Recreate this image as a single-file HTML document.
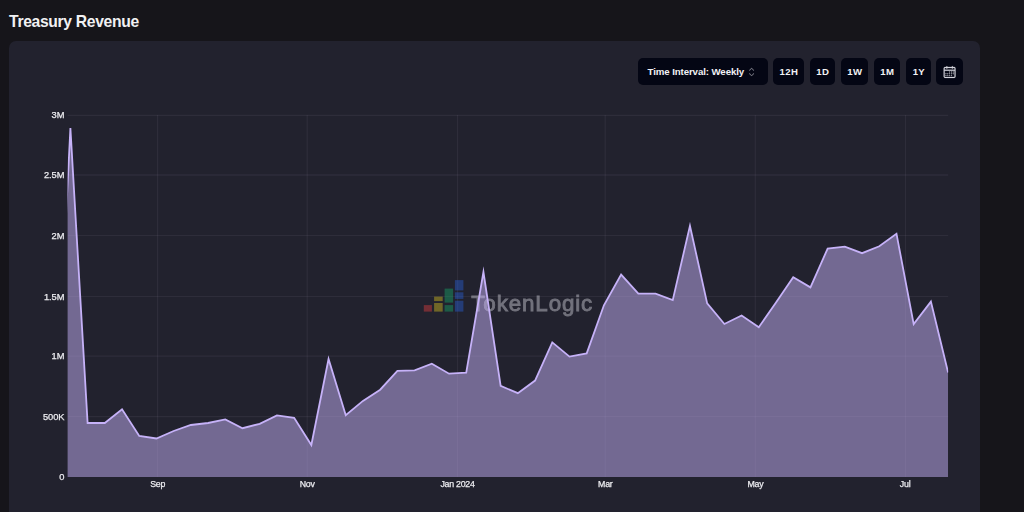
<!DOCTYPE html>
<html><head><meta charset="utf-8"><title>Treasury Revenue</title>
<style>
html,body{margin:0;padding:0;}
body{width:1024px;height:512px;overflow:hidden;background:#16151a;font-family:"Liberation Sans",sans-serif;position:relative;color:#fff;}
.title{position:absolute;left:9px;top:12px;font-size:15.7px;font-weight:bold;line-height:20px;color:#f1f1f3;white-space:nowrap;letter-spacing:-0.33px;}
.card{position:absolute;left:9px;top:41px;width:971px;height:500px;background:#22222e;border-radius:7px;}
.btn{position:absolute;top:58px;height:27px;background:#040614;border-radius:5px;color:#f2f2f5;font-size:9.6px;font-weight:bold;line-height:28px;letter-spacing:0.4px;text-indent:0.8px;text-align:center;white-space:nowrap;}
.sel{left:637.5px;width:130px;text-align:left;font-size:9.7px;letter-spacing:-0.1px;}
.sel span{position:absolute;left:10px;top:0;text-indent:0;}
svg.main{position:absolute;left:0;top:0;will-change:transform;}
.tick{fill:#ececf0;stroke:#ececf0;stroke-width:0.25px;font-family:"Liberation Sans",sans-serif;}
</style></head><body>
<div class="title">Treasury Revenue</div>
<div class="card"></div>
<div class="btn sel"><span>Time Interval: Weekly</span></div>
<div class="btn" style="left:773px;width:31px">12H</div>
<div class="btn" style="left:810px;width:25px">1D</div>
<div class="btn" style="left:841px;width:27px">1W</div>
<div class="btn" style="left:874px;width:26px">1M</div>
<div class="btn" style="left:906px;width:25px">1Y</div>
<div class="btn" style="left:936px;width:27px"></div>
<svg class="main" width="1024" height="512" viewBox="0 0 1024 512">
<defs><clipPath id="plot"><rect x="67.6" y="100" width="880.6" height="377.1"/></clipPath></defs>
<!-- grid -->
<g stroke="rgb(235,225,255)" stroke-opacity="0.057">
<line x1="67.6" x2="948.2" y1="115.35" y2="115.35" stroke-width="1.3"/>
<line x1="67.6" x2="948.2" y1="175.0" y2="175.0" stroke-width="1.5"/>
<line x1="67.6" x2="948.2" y1="235.5" y2="235.5" stroke-width="1.15"/>
<line x1="67.6" x2="948.2" y1="296.5" y2="296.5" stroke-width="1.15"/>
<line x1="67.6" x2="948.2" y1="356.2" y2="356.2" stroke-width="1.3"/>
<line x1="67.6" x2="948.2" y1="416.55" y2="416.55" stroke-width="1.15"/>
<line y1="115" y2="477.1" x1="157.6" x2="157.6" stroke-width="1.2"/>
<line y1="115" y2="477.1" x1="307.2" x2="307.2" stroke-width="1.2"/>
<line y1="115" y2="477.1" x1="457.55" x2="457.55" stroke-width="1.2"/>
<line y1="115" y2="477.1" x1="605.2" x2="605.2" stroke-width="1.2"/>
<line y1="115" y2="477.1" x1="755.3" x2="755.3" stroke-width="1.2"/>
<line y1="115" y2="477.1" x1="905.5" x2="905.5" stroke-width="1.2"/>
</g>
<!-- watermark -->
<g opacity="0.43">
<rect x="423.8" y="305.1" width="8.1" height="6.5" fill="#e04040"/>
<rect x="434.1" y="296.6" width="8.6" height="4.5" fill="#d8c020"/>
<rect x="434.1" y="303" width="8.6" height="8.6" fill="#d8c020"/>
<rect x="444.6" y="288.6" width="8.5" height="14" fill="#18a868"/>
<rect x="444.6" y="305.1" width="8.5" height="6.5" fill="#18a868"/>
<rect x="454.9" y="280.1" width="8.5" height="10.3" fill="#2860d8"/>
<rect x="454.9" y="292.3" width="8.5" height="6.6" fill="#2860d8"/>
<rect x="454.9" y="300.75" width="8.5" height="10.85" fill="#2860d8"/>
<text x="471.3" y="311.2" font-family="Liberation Sans, sans-serif" font-size="22.4" fill="#dcdce4" stroke="#dcdce4" stroke-width="0.85" letter-spacing="0.86">TokenLogic</text>
</g>
<g clip-path="url(#plot)">
<path d="M53.19,472 L70.4,128.1 L87.61,423 L104.82,423 L122.03,409.3 L139.24,436 L156.45,438.5 L173.66,431 L190.87,425 L208.08,423 L225.29,419.4 L242.5,428.2 L259.71,423.8 L276.92,415.4 L294.13,417.8 L311.34,445.0 L328.55,359.0 L345.76,415.3 L362.97,400.9 L380.18,389.7 L397.39,370.9 L414.6,370.3 L431.81,363.75 L449.02,373.7 L466.23,372.75 L483.44,272.0 L500.65,385.9 L517.86,393.2 L535.07,380.6 L552.28,342.4 L569.49,356.6 L586.7,353.4 L603.91,305.3 L621.12,274.6 L638.33,293.7 L655.54,293.7 L672.75,300.1 L689.96,225.8 L707.17,303.4 L724.38,324 L741.59,315.5 L758.8,327.2 L776.01,302.5 L793.22,277.3 L810.43,287.4 L827.64,248.6 L844.85,246.6 L862.06,253.2 L879.27,246.3 L896.48,233.7 L913.69,324.1 L930.9,301.6 L948.11,372.5 L948.11,477.1 L53.19,477.1 Z" fill="rgba(196,176,246,0.5)" stroke="none"/>
<path d="M53.19,472 L70.4,128.1 L87.61,423 L104.82,423 L122.03,409.3 L139.24,436 L156.45,438.5 L173.66,431 L190.87,425 L208.08,423 L225.29,419.4 L242.5,428.2 L259.71,423.8 L276.92,415.4 L294.13,417.8 L311.34,445.0 L328.55,359.0 L345.76,415.3 L362.97,400.9 L380.18,389.7 L397.39,370.9 L414.6,370.3 L431.81,363.75 L449.02,373.7 L466.23,372.75 L483.44,272.0 L500.65,385.9 L517.86,393.2 L535.07,380.6 L552.28,342.4 L569.49,356.6 L586.7,353.4 L603.91,305.3 L621.12,274.6 L638.33,293.7 L655.54,293.7 L672.75,300.1 L689.96,225.8 L707.17,303.4 L724.38,324 L741.59,315.5 L758.8,327.2 L776.01,302.5 L793.22,277.3 L810.43,287.4 L827.64,248.6 L844.85,246.6 L862.06,253.2 L879.27,246.3 L896.48,233.7 L913.69,324.1 L930.9,301.6 L948.11,372.5" fill="none" stroke="#c6b2f8" stroke-width="1.8" stroke-linejoin="miter" stroke-miterlimit="10"/>
</g>
<g class="tick" text-anchor="end" font-size="9.3" letter-spacing="-0.1">
<text x="64.3" y="118.1">3M</text>
<text x="64.3" y="178.1">2.5M</text>
<text x="64.3" y="238.7">2M</text>
<text x="64.3" y="299.5">1.5M</text>
<text x="64.3" y="359.2">1M</text>
<text x="64.3" y="419.5">500K</text>
<text x="64.3" y="479.6">0</text>
</g>
<g class="tick" text-anchor="middle" font-size="8.8" letter-spacing="-0.25">
<text x="157.6" y="487.4">Sep</text>
<text x="307.2" y="487.4">Nov</text>
<text x="457.5" y="487.4">Jan 2024</text>
<text x="605.3" y="487.4">Mar</text>
<text x="755.4" y="487.4">May</text>
<text x="905.1" y="487.4">Jul</text>
</g>
<!-- caret sort icon -->
<svg x="744.6" y="65" width="14" height="14" viewBox="0 0 15 15" opacity="0.5"><path fill="#e8e8f0" fill-rule="evenodd" clip-rule="evenodd" d="M4.93179 5.43179C4.75605 5.60753 4.75605 5.89245 4.93179 6.06819C5.10753 6.24392 5.39245 6.24392 5.56819 6.06819L7.49999 4.13638L9.43179 6.06819C9.60753 6.24392 9.89245 6.24392 10.0682 6.06819C10.2439 5.89245 10.2439 5.60753 10.0682 5.43179L7.81819 3.18179C7.73379 3.0974 7.61933 3.04999 7.49999 3.04999C7.38064 3.04999 7.26618 3.0974 7.18179 3.18179L4.93179 5.43179ZM10.0682 9.56819C10.2439 9.39245 10.2439 9.10753 10.0682 8.93179C9.89245 8.75606 9.60753 8.75606 9.43179 8.93179L7.49999 10.8636L5.56819 8.93179C5.39245 8.75606 5.10753 8.75606 4.93179 8.93179C4.75605 9.10753 4.75605 9.39245 4.93179 9.56819L7.18179 11.8182C7.35753 11.9939 7.64245 11.9939 7.81819 11.8182L10.0682 9.56819Z"/></svg>
<!-- calendar icon -->
<svg x="942.8" y="65.2" width="13.6" height="13.6" viewBox="0 0 15 15"><path fill="#d6d6de" stroke="#d6d6de" stroke-width="0.3" fill-rule="evenodd" clip-rule="evenodd" d="M4.5 1C4.77614 1 5 1.22386 5 1.5V2H10V1.5C10 1.22386 10.2239 1 10.5 1C10.7761 1 11 1.22386 11 1.5V2H12.5C13.3284 2 14 2.67157 14 3.5V12.5C14 13.3284 13.3284 14 12.5 14H2.5C1.67157 14 1 13.3284 1 12.5V3.5C1 2.67157 1.67157 2 2.5 2H4V1.5C4 1.22386 4.22386 1 4.5 1ZM10 3V3.5C10 3.77614 10.2239 4 10.5 4C10.7761 4 11 3.77614 11 3.5V3H12.5C12.7761 3 13 3.22386 13 3.5V5H2V3.5C2 3.22386 2.22386 3 2.5 3H4V3.5C4 3.77614 4.22386 4 4.5 4C4.77614 4 5 3.77614 5 3.5V3H10ZM2 6V12.5C2 12.7761 2.22386 13 2.5 13H12.5C12.7761 13 13 12.7761 13 12.5V6H2ZM7 7.5C7 7.22386 7.22386 7 7.5 7C7.77614 7 8 7.22386 8 7.5C8 7.77614 7.77614 8 7.5 8C7.22386 8 7 7.77614 7 7.5ZM9.5 7C9.22386 7 9 7.22386 9 7.5C9 7.77614 9.22386 8 9.5 8C9.77614 8 10 7.77614 10 7.5C10 7.22386 9.77614 7 9.5 7ZM11 7.5C11 7.22386 11.2239 7 11.5 7C11.7761 7 12 7.22386 12 7.5C12 7.77614 11.7761 8 11.5 8C11.2239 8 11 7.77614 11 7.5ZM11.5 9C11.2239 9 11 9.22386 11 9.5C11 9.77614 11.2239 10 11.5 10C11.7761 10 12 9.77614 12 9.5C12 9.22386 11.7761 9 11.5 9ZM9 9.5C9 9.22386 9.22386 9 9.5 9C9.77614 9 10 9.22386 10 9.5C10 9.77614 9.77614 10 9.5 10C9.22386 10 9 9.77614 9 9.5ZM7.5 9C7.22386 9 7 9.22386 7 9.5C7 9.77614 7.22386 10 7.5 10C7.77614 10 8 9.77614 8 9.5C8 9.22386 7.77614 9 7.5 9ZM5 9.5C5 9.22386 5.22386 9 5.5 9C5.77614 9 6 9.22386 6 9.5C6 9.77614 5.77614 10 5.5 10C5.22386 10 5 9.77614 5 9.5ZM3.5 9C3.22386 9 3 9.22386 3 9.5C3 9.77614 3.22386 10 3.5 10C3.77614 10 4 9.77614 4 9.5C4 9.22386 3.77614 9 3.5 9ZM3 11.5C3 11.2239 3.22386 11 3.5 11C3.77614 11 4 11.2239 4 11.5C4 11.7761 3.77614 12 3.5 12C3.22386 12 3 11.7761 3 11.5ZM5.5 11C5.22386 11 5 11.2239 5 11.5C5 11.7761 5.22386 12 5.5 12C5.77614 12 6 11.7761 6 11.5C6 11.2239 5.77614 11 5.5 11ZM7 11.5C7 11.2239 7.22386 11 7.5 11C7.77614 11 8 11.2239 8 11.5C8 11.7761 7.77614 12 7.5 12C7.22386 12 7 11.7761 7 11.5ZM9.5 11C9.22386 11 9 11.2239 9 11.5C9 11.7761 9.22386 12 9.5 12C9.77614 12 10 11.7761 10 11.5C10 11.2239 9.77614 11 9.5 11Z"/></svg>
</svg>
</body></html>
